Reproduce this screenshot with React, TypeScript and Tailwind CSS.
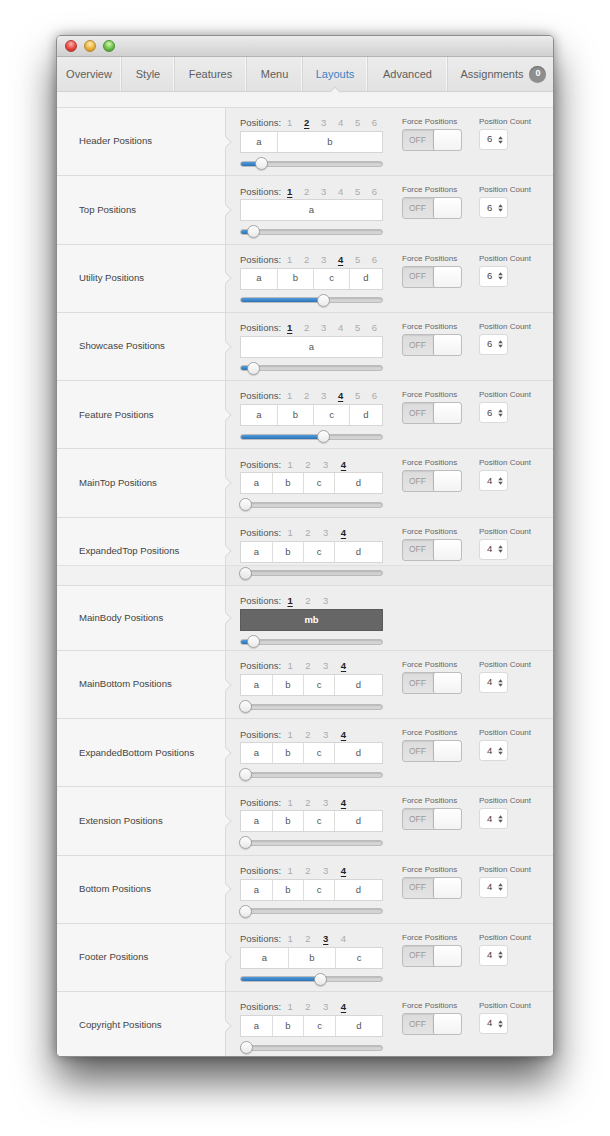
import React from 'react';

type Cell = { t: string; w: number };
type Row = {
  label: string;
  max: number;
  sel: number;
  cells?: Cell[];
  dark?: boolean;
  knob: number;
  count?: string;
  h: string;
  glitch?: boolean;
};

const u4: Cell[] = [
  { t: 'a', w: 37 },
  { t: 'b', w: 36 },
  { t: 'c', w: 36 },
  { t: 'd', w: 34 },
];
const m4: Cell[] = [
  { t: 'a', w: 32 },
  { t: 'b', w: 31 },
  { t: 'c', w: 31 },
  { t: 'd', w: 49 },
];
const one: Cell[] = [{ t: 'a', w: 143 }];

const rows: Row[] = [
  { label: 'Header Positions', max: 6, sel: 2, cells: [{ t: 'a', w: 37 }, { t: 'b', w: 106 }], knob: 21, count: '6', h: 'h-[68.3px]' },
  { label: 'Top Positions', max: 6, sel: 1, cells: one, knob: 13, count: '6', h: 'h-[68.3px]' },
  { label: 'Utility Positions', max: 6, sel: 4, cells: u4, knob: 83, count: '6', h: 'h-[68.3px]' },
  { label: 'Showcase Positions', max: 6, sel: 1, cells: one, knob: 13, count: '6', h: 'h-[68.3px]' },
  { label: 'Feature Positions', max: 6, sel: 4, cells: u4, knob: 83, count: '6', h: 'h-[68.3px]' },
  { label: 'MainTop Positions', max: 4, sel: 4, cells: m4, knob: 5, count: '4', h: 'h-[68.3px]' },
  { label: 'ExpandedTop Positions', max: 4, sel: 4, cells: m4, knob: 5, count: '4', h: 'h-[68.3px]', glitch: true },
  { label: 'MainBody Positions', max: 3, sel: 1, dark: true, knob: 13, h: 'h-[65px]' },
  { label: 'MainBottom Positions', max: 4, sel: 4, cells: m4, knob: 5, count: '4', h: 'h-[68.2px]' },
  { label: 'ExpandedBottom Positions', max: 4, sel: 4, cells: m4, knob: 5, count: '4', h: 'h-[68.2px]' },
  { label: 'Extension Positions', max: 4, sel: 4, cells: m4, knob: 5, count: '4', h: 'h-[68.2px]' },
  { label: 'Bottom Positions', max: 4, sel: 4, cells: m4, knob: 5, count: '4', h: 'h-[68.2px]' },
  { label: 'Footer Positions', max: 4, sel: 3, cells: [{ t: 'a', w: 48 }, { t: 'b', w: 47 }, { t: 'c', w: 48 }], knob: 80, count: '4', h: 'h-[68.2px]' },
  { label: 'Copyright Positions', max: 4, sel: 4, cells: [{ t: 'a', w: 32 }, { t: 'b', w: 31 }, { t: 'c', w: 32 }, { t: 'd', w: 48 }], knob: 6, count: '4', h: 'h-[68.2px]' },
];

const tabs = [
  { t: 'Overview', w: 'w-[65px]' },
  { t: 'Style', w: 'w-[53px]' },
  { t: 'Features', w: 'w-[72px]' },
  { t: 'Menu', w: 'w-[56px]' },
  { t: 'Layouts', w: 'w-[65px]', active: true },
  { t: 'Advanced', w: 'w-[80px]' },
];

function Slider({ knob }: { knob: number }) {
  return (
    <div className="relative w-[143px] h-[13px] flex items-center">
      <div className="w-full h-[6px] rounded-full bg-[#d4d4d4] border border-[#bcbcbc] shadow-[inset_0_1px_1px_rgba(0,0,0,0.12)] overflow-hidden">
        <div
          className="h-full bg-gradient-to-b from-[#4f9bdb] to-[#2b73b8]"
          style={{ width: knob }}
        />
      </div>
      <div
        className="absolute top-0 w-[13px] h-[13px] rounded-full border border-[#a3a3a3] bg-gradient-to-b from-white to-[#e9e9e9] shadow-[0_1px_1px_rgba(0,0,0,0.15)]"
        style={{ left: knob - 6.5 }}
      />
    </div>
  );
}

function UpDown() {
  return (
    <svg width="5" height="8" viewBox="0 0 5 8">
      <path d="M2.5 0.3L4.8 3.2H0.2z M2.5 7.7L0.2 4.8H4.8z" fill="#5a5a5a" />
    </svg>
  );
}

function RowView({ r }: { r: Row }) {
  const nums = Array.from({ length: r.max }, (_, i) => i + 1);
  return (
    <div className={`relative flex ${r.h} border-b border-[#dcdcdc]`}>
      <div className="relative w-[169px] shrink-0 bg-[#f6f6f6] border-r border-[#dadada] flex items-center pl-[22px]">
        <span className="text-[9.6px] text-[#444]">{r.label}</span>
        <div className="absolute right-[-5px] top-1/2 -mt-[4px] w-[8px] h-[8px] rotate-45 bg-[#f6f6f6] border-t border-r border-[#dadada]" />
      </div>
      <div className="flex-1 bg-[#eeeeee] flex pl-[14px]">
        <div className="w-[143px] flex flex-col pt-[9px]">
          <div className="h-[12px] flex items-center text-[9.5px] leading-none">
            <span className="text-[#555]">Positions:</span>
            {nums.map((n) => (
              <span
                key={n}
                className={
                  n === r.sel
                    ? 'w-[17.8px] text-center font-bold text-[#222] underline underline-offset-[1.5px]'
                    : 'w-[17.8px] text-center text-[#ababab]'
                }
              >
                {n}
              </span>
            ))}
          </div>
          {r.dark ? (
            <div className="mt-[2px] h-[22px] bg-[#666666] border border-[#5a5a5a] flex items-center justify-center text-[9.5px] font-bold text-white">
              mb
            </div>
          ) : (
            <div className="mt-[2px] h-[22px] bg-white border border-[#d6d6d6] flex">
              {r.cells!.map((c, i) => (
                <div
                  key={i}
                  className={`h-full flex items-center justify-center text-[9.5px] text-[#555] ${
                    i > 0 ? 'border-l border-[#dedede]' : ''
                  } ${i === r.cells!.length - 1 ? 'flex-1' : 'shrink-0'}`}
                  style={i === r.cells!.length - 1 ? undefined : { width: c.w - (i === 0 ? 1 : 0) }}
                >
                  {c.t}
                </div>
              ))}
            </div>
          )}
          <div className="mt-[4px]">
            <Slider knob={r.knob} />
          </div>
        </div>
        {r.count && (
          <>
            <div className="ml-[19px] flex flex-col pt-[8px]">
              <div className="h-[12px] flex items-center text-[8px] text-[#666] leading-none">Force Positions</div>
              <div className="mt-[1px] w-[60px] h-[22px] rounded-[3px] border border-[#bdbdbd] bg-gradient-to-b from-[#dcdcdc] to-[#e4e4e4] flex overflow-hidden shadow-[inset_0_1px_1px_rgba(0,0,0,0.08)]">
                <div className="w-[30px] flex items-center pl-[6px] text-[8.5px] text-[#999]">OFF</div>
                <div className="flex-1 bg-gradient-to-b from-white to-[#f3f3f3] border-l border-[#b5b5b5] rounded-[2px] shadow-[0_0_1px_rgba(0,0,0,0.2)]" />
              </div>
            </div>
            <div className="ml-[17px] flex flex-col pt-[8px]">
              <div className="h-[12px] flex items-center text-[8px] text-[#666] leading-none">Position Count</div>
              <div className="mt-[1px] w-[29px] h-[21px] rounded-[3px] border border-[#dadada] bg-white flex items-center pl-[7px] gap-[6px]">
                <span className="text-[9.5px] text-[#444]">{r.count}</span>
                <UpDown />
              </div>
            </div>
          </>
        )}
      </div>
      {r.glitch && (
        <div className="absolute left-0 right-0 top-[47px] h-[20px] border-t border-[#e0e0e0] bg-[rgba(0,0,0,0.015)] pointer-events-none" />
      )}
    </div>
  );
}

export default function App() {
  return (
    <div className="w-[610px] h-[1136px] bg-white overflow-hidden pt-[35px] font-['Liberation_Sans',Arial,sans-serif]">
      <div className="ml-[56px] w-[498px] h-[1022px] rounded-[5px] border border-[#8c8c8c] bg-[#eeeeee] overflow-hidden flex flex-col shadow-[0_24px_40px_rgba(0,0,0,0.62),0_0_12px_rgba(0,0,0,0.35)]">
        {/* title bar */}
        <div className="h-[21px] shrink-0 bg-gradient-to-b from-[#ececec] to-[#d0d0d0] border-b border-[#b4b4b4] flex items-center pl-[8px] gap-[7px]">
          <div className="w-[12px] h-[12px] rounded-full border border-[#b23a33] bg-[radial-gradient(circle_at_50%_30%,#ffb3ab,#e5483f_55%,#b8261d)]" />
          <div className="w-[12px] h-[12px] rounded-full border border-[#b98a2e] bg-[radial-gradient(circle_at_50%_30%,#fff0b0,#e9b23e_55%,#c17f14)]" />
          <div className="w-[12px] h-[12px] rounded-full border border-[#4c9135] bg-[radial-gradient(circle_at_50%_30%,#d5f7b0,#6cc24d_55%,#3a8a22)]" />
        </div>
        {/* tabs */}
        <div className="h-[35px] shrink-0 bg-gradient-to-b from-[#ececec] to-[#e2e2e2] border-b border-[#d2d2d2] flex">
          {tabs.map((t) => (
            <div
              key={t.t}
              className={`${t.w} relative h-full border-r border-[#d6d6d6] shadow-[inset_-1px_0_0_rgba(255,255,255,0.6)] flex items-center justify-center text-[11px] ${
                t.active ? 'text-[#3b82c4]' : 'text-[#5e5e5e]'
              }`}
            >
              {t.t}
              {t.active && (
                <div className="absolute bottom-[-5px] left-1/2 -ml-[4px] w-[8px] h-[8px] rotate-45 bg-[#f4f4f4] border-t border-l border-[#d2d2d2]" />
              )}
            </div>
          ))}
          <div className="flex-1 h-full flex items-center justify-center gap-[6px] text-[11px] text-[#5e5e5e] pl-[6px]">
            <span>Assignments</span>
            <span className="w-[17px] h-[17px] rounded-full bg-[#8e8e8e] text-white text-[9px] font-bold flex items-center justify-center shadow-[inset_0_1px_1px_rgba(0,0,0,0.25)]">
              0
            </span>
          </div>
        </div>
        {/* strip */}
        <div className="h-[16px] shrink-0 bg-[#f4f4f4] border-b border-[#dcdcdc]" />
        {/* rows */}
        <div className="flex flex-col">
          {rows.map((r) => (
            <RowView key={r.label} r={r} />
          ))}
        </div>
      </div>
    </div>
  );
}
